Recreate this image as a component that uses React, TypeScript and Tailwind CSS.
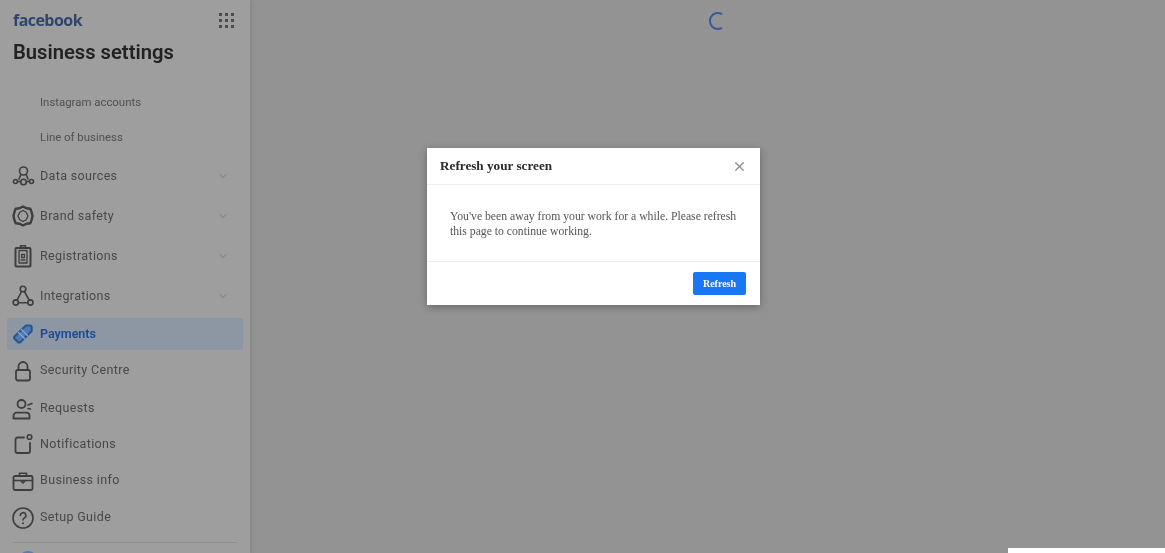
import { ChevronDown, X } from "lucide-react";
import type { ReactNode } from "react";

const sans = "font-['Roboto','Liberation_Sans',sans-serif]";

function Svg({ children, color = "#3e3e3e" }: { children: ReactNode; color?: string }) {
  return (
    <svg
      width="24"
      height="24"
      viewBox="0 0 24 24"
      fill="none"
      stroke={color}
      strokeWidth="1.6"
      strokeLinecap="round"
      strokeLinejoin="round"
      className="shrink-0"
    >
      {children}
    </svg>
  );
}

const icons: Record<string, ReactNode> = {
  data: (
    <Svg>
      <circle cx="12.5" cy="7" r="4" />
      <path d="M9.8 10.5 8 15M15.2 10.5 17 15M6.5 17.5h3M15.5 17.5h3" />
      <circle cx="4.5" cy="17.5" r="2" />
      <circle cx="12.5" cy="18" r="2.8" />
      <circle cx="20.5" cy="17.5" r="2" />
    </Svg>
  ),
  brand: (
    <Svg>
      <path d="M12 2.5l3.5 1.8 3.8.4 1.4 3.7.8 3.6-.8 3.6-1.4 3.7-3.8.4L12 21.5l-3.5-1.8-3.8-.4-1.4-3.7-.8-3.6.8-3.6 1.4-3.7 3.8-.4z" strokeWidth="2.4" />
      <path d="M12 6.5l3.2 1.8 1.8 3.700-1.8 3.700-3.200 1.800-3.200-1.800L7 12l1.800-3.700z" strokeWidth="1.3" />
    </Svg>
  ),
  reg: (
    <Svg>
      <rect x="4.5" y="4" width="15" height="18.5" rx="1" strokeWidth="2" />
      <path d="M9.5 4V1.8h5V4" />
      <path d="M8 6.5h8V19H8z" strokeWidth="1.3" />
      <path d="M10.5 10.5h3v3h-3zM10 16h4" strokeWidth="1.3" />
    </Svg>
  ),
  integ: (
    <Svg>
      <circle cx="12" cy="5" r="2.8" />
      <circle cx="4.8" cy="18.5" r="2.6" />
      <circle cx="19.4" cy="18.5" r="2.6" />
      <path d="M10.6 7.5 6 16.2M13.4 7.5l4.8 8.7M7.4 18.8h9.4" />
    </Svg>
  ),
  pay: (
    <Svg color="#29558f">
      <path d="M15 3.5h3.700a2 2 0 0 1 2 2V9L9.500 20a2 2 0 0 1-2.800 0L3.800 17a2 2 0 0 1 0-2.800z" fill="#4f7ab5" strokeWidth="2" />
      <path d="M7.5 10.5l6 6M10.5 7.5l6 6" strokeWidth="1.3" stroke="#8ea6c8" />
    </Svg>
  ),
  lock: (
    <Svg>
      <rect x="5" y="11" width="14" height="10.5" rx="2" strokeWidth="1.8" />
      <path d="M7.5 11V7.5a4.500 4.500 0 0 1 9 0V11" strokeWidth="1.8" />
    </Svg>
  ),
  req: (
    <Svg>
      <circle cx="10.5" cy="7" r="4" strokeWidth="1.8" />
      <path d="M2.5 21.5v-2.800a3 3 0 0 1 3-3h10a3 3 0 0 1 3 3v2.800z" strokeWidth="1.8" />
      <path d="M17 8l4-1.500M17 11.500l2.500.5" />
    </Svg>
  ),
  notif: (
    <Svg>
      <path d="M13 5.5H6.500a2 2 0 0 0-2 2V19a2 2 0 0 0 2 2H17a2 2 0 0 0 2-2v-8" strokeWidth="1.8" />
      <circle cx="18.5" cy="5" r="2.3" />
    </Svg>
  ),
  info: (
    <Svg>
      <rect x="2.5" y="7" width="19" height="14" rx="1.5" strokeWidth="1.8" />
      <path d="M8.5 7V4.200h7V7M2.500 11.500h19M9.500 11.500l2.500 2.500 2.500-2.500" strokeWidth="1.6" />
    </Svg>
  ),
  guide: (
    <Svg>
      <circle cx="12" cy="12" r="10" strokeWidth="1.6" />
      <path d="M9.3 9.5a2.800 2.800 0 1 1 4.200 2.400c-1 .6-1.500 1.100-1.500 2.100" strokeWidth="1.6" />
      <path d="M12 17.2v.1" strokeWidth="2" />
    </Svg>
  ),
};

function NavRow({ icon, label, chevron, h }: { icon: string; label: string; chevron?: boolean; h: string }) {
  return (
    <div className={`mx-[7px] flex items-center pl-[4px] pr-[14px] ${h}`}>
      {icons[icon]}
      <span className="ml-[5px] flex-1 text-[12.5px] tracking-[0.35px] text-[#484848]">{label}</span>
      {chevron && <ChevronDown size={12} strokeWidth={2} className="text-[#7c7c7c]" />}
    </div>
  );
}

export default function App() {
  return (
    <div className={`relative flex h-[553px] w-[1165px] overflow-hidden bg-[#939393] blur-[0.7px] ${sans}`}>
      <aside className="flex h-full w-[250px] shrink-0 flex-col overflow-hidden bg-[#9e9e9e] shadow-[2px_0_4px_rgba(0,0,0,0.08)]">
        <div className="flex items-center justify-between pl-[13px] pr-[16px] pt-[9px]">
          <span className="font-['Open_Sans',sans-serif] text-[16px] font-bold leading-[22px] tracking-[-0.55px] text-[#2f4569]">
            facebook
          </span>
          <div className="grid grid-cols-3 gap-[3px]">
            {Array.from({ length: 9 }).map((_, i) => (
              <span key={i} className="h-[3px] w-[3px] bg-[#4c4c4c]" />
            ))}
          </div>
        </div>
        <h1 className="mt-[7px] pl-[13px] text-[20.2px] font-semibold leading-[28px] text-[#222222]">Business settings</h1>

        <div className="mt-[19px] pl-[40px] text-[11.4px] text-[#505050]">
          <div className="flex h-[35px] items-center">Instagram accounts</div>
          <div className="flex h-[35px] items-center">Line of business</div>
        </div>

        <div className="mt-[1px]">
          <NavRow icon="data" label="Data sources" chevron h="h-[40px]" />
          <NavRow icon="brand" label="Brand safety" chevron h="h-[40px]" />
          <NavRow icon="reg" label="Registrations" chevron h="h-[40px]" />
          <NavRow icon="integ" label="Integrations" chevron h="h-[40px]" />
          <div className="mx-[7px] mt-[2px] flex h-[32px] items-center rounded-[2px] bg-[#8d96a3] pl-[4px]">
            {icons.pay}
            <span className="ml-[5px] text-[12.5px] font-semibold text-[#1d4a94]">Payments</span>
          </div>
          <NavRow icon="lock" label="Security Centre" h="h-[41px]" />
          <NavRow icon="req" label="Requests" h="h-[35px]" />
          <NavRow icon="notif" label="Notifications" h="h-[36px]" />
          <NavRow icon="info" label="Business info" h="h-[37px]" />
          <NavRow icon="guide" label="Setup Guide" h="h-[37px]" />
        </div>
        <div className="mx-[13px] mt-[6px] h-px shrink-0 bg-[#8f8f8f]" />
        <div className="ml-[18px] mt-[8px] h-[20px] w-[20px] shrink-0 rounded-full border-2 border-[#5f7ba8]" />
      </aside>

      <main className="relative flex-1">
        <div className="flex justify-center pt-[10px]">
          <svg width="22" height="22" viewBox="0 0 22 22" fill="none" className="ml-[19px]">
            <path d="M15.5 3.8A8 8 0 1 0 15.5 18.2" stroke="#375a9c" strokeWidth="2" strokeLinecap="round" />
          </svg>
        </div>
        <div className="absolute left-[177px] top-[148px] flex h-[157px] w-[333px] flex-col bg-white font-['Liberation_Serif',serif] shadow-[0_2px_8px_rgba(0,0,0,0.3)]">
          <div className="flex h-[37px] items-center justify-between border-b border-[#eeeeee] px-[13px]">
            <span className="text-[13.2px] font-bold text-[#2a2a2a]">Refresh your screen</span>
            <X size={15} className="text-[#8a8a8a]" />
          </div>
          <div className="flex-1 border-b border-[#eeeeee] pl-[23px] pr-[20px] pt-[24px] text-[11.7px] leading-[15px] text-[#555555]">
            You've been away from your work for a while. Please refresh this page to continue working.
          </div>
          <div className="flex h-[43px] items-center justify-end pr-[14px]">
            <button className="flex h-[23px] w-[53px] items-center justify-center rounded-[2px] bg-[#1877f2] text-[10px] font-bold text-white">
              Refresh
            </button>
          </div>
        </div>
      </main>

      <div className="absolute bottom-0 right-0 h-[5px] w-[157px] bg-white" />
    </div>
  );
}
